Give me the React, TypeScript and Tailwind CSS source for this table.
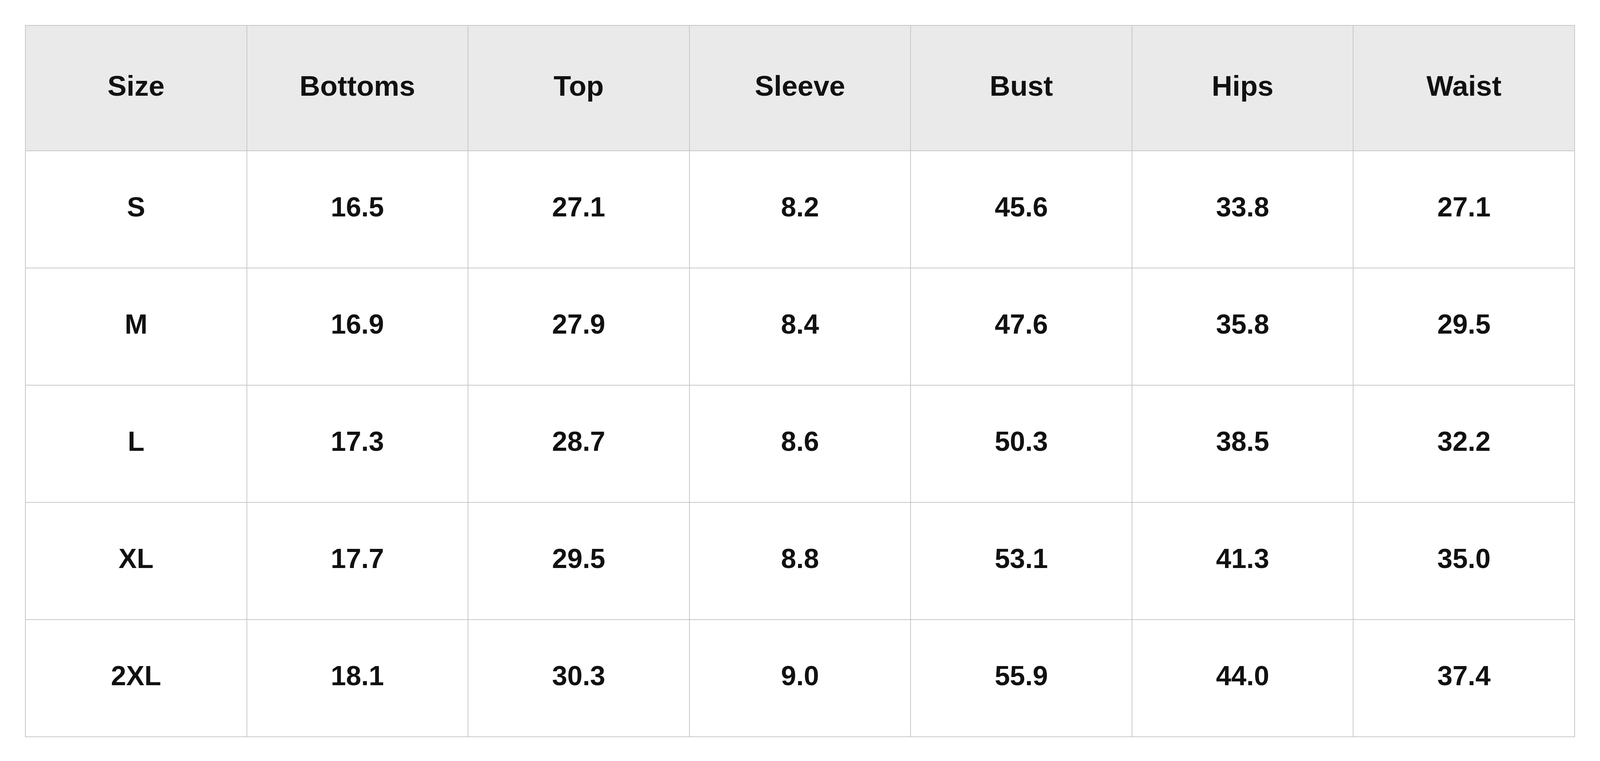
const columns = ["Size", "Bottoms", "Top", "Sleeve", "Bust", "Hips", "Waist"];

const rows = [
  ["S", "16.5", "27.1", "8.2", "45.6", "33.8", "27.1"],
  ["M", "16.9", "27.9", "8.4", "47.6", "35.8", "29.5"],
  ["L", "17.3", "28.7", "8.6", "50.3", "38.5", "32.2"],
  ["XL", "17.7", "29.5", "8.8", "53.1", "41.3", "35.0"],
  ["2XL", "18.1", "30.3", "9.0", "55.9", "44.0", "37.4"],
];

export default function App() {
  return (
    <div className="w-full h-screen bg-white p-16 font-['Liberation_Sans',Arial,sans-serif] text-[#111111]">
      <div className="grid grid-cols-7 border-t-2 border-l-2 border-[#c8c8c8]">
        {columns.map((col) => (
          <div
            key={col}
            className="flex h-[321px] items-center justify-center border-r-2 border-b-2 border-[#c8c8c8] bg-[#eaeaea] pb-3 text-[73px] font-bold leading-none"
          >
            {col}
          </div>
        ))}
        {rows.map((row) =>
          row.map((cell, i) => (
            <div
              key={row[0] + i}
              className="flex h-[300px] items-center justify-center border-r-2 border-b-2 border-[#c8c8c8] pb-3 text-[70px] font-bold leading-none"
            >
              {cell}
            </div>
          ))
        )}
      </div>
    </div>
  );
}
